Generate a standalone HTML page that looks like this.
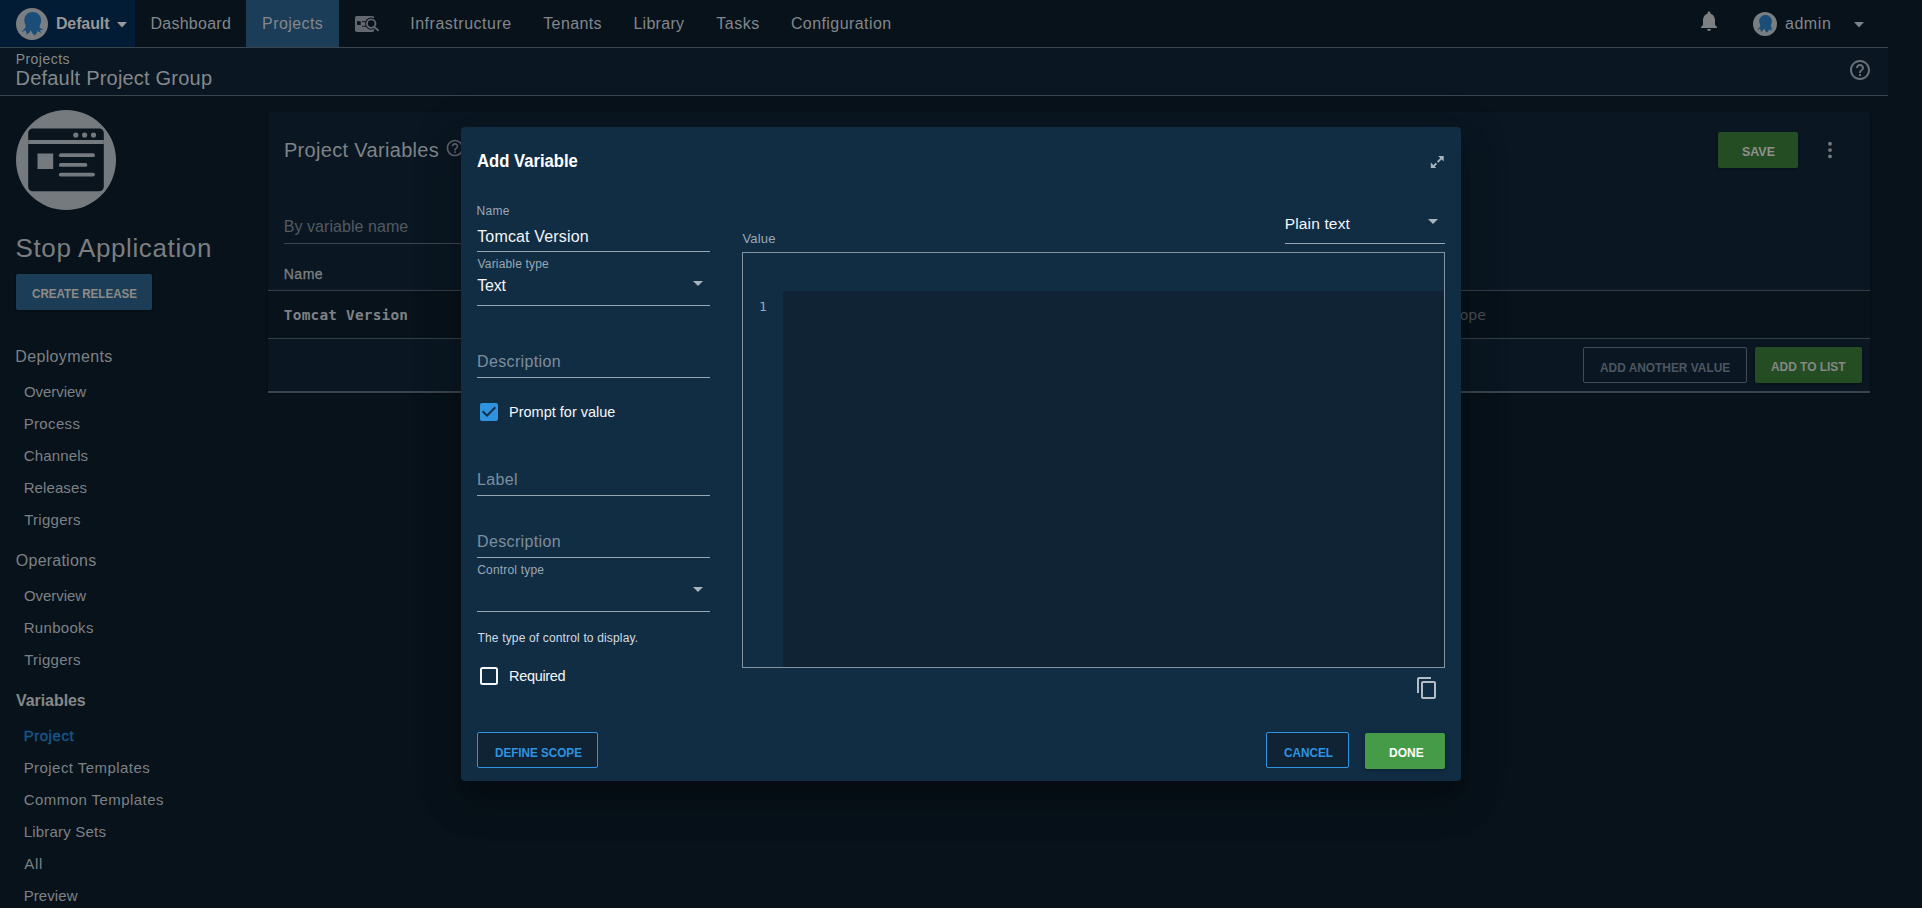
<!DOCTYPE html>
<html lang="en"><head><meta charset="utf-8"><title>Project Variables - Stop Application</title>
<style>
html,body{margin:0;padding:0}
body{width:1922px;height:908px;overflow:hidden;position:relative;background:#08121a;font-family:"Liberation Sans",sans-serif;-webkit-font-smoothing:auto}
.a{position:absolute;box-sizing:border-box}
.t{position:absolute;white-space:pre;display:block}
svg{position:absolute;overflow:visible}
#nav{left:0;top:0;width:1888px;height:48px;border-bottom:1px solid #3b454d;background:#08121a}
#space{left:0;top:0;width:135px;height:47px;background:#011c34}
#tab{left:246px;top:0;width:93px;height:47px;background:#1b3d58}
#crumb{left:0;top:48px;width:1888px;height:48px;border-bottom:1px solid #3b454d;background:#0a1722}
#panel{left:268px;top:112px;width:1602px;height:280px;background:#0a1722;border-radius:3px;box-shadow:0 1px 3px rgba(0,0,0,.35)}
.hl{height:1px;background:#363f48}
.btn{border-radius:2px}
#dialog{left:461px;top:127px;width:1000px;height:654px;background:#112d44;border-radius:4px;box-shadow:0 11px 15px -7px rgba(0,0,0,.2),0 24px 38px 3px rgba(0,0,0,.14),0 9px 46px 8px rgba(0,0,0,.12)}
.ul{height:1px;background:#98a6b3}

</style></head><body>
<div class="a" id="nav"></div>
<div class="a" id="space"></div>
<div class="a" id="tab"></div>
<div class="a" id="crumb"></div>
<!-- space avatar -->
<svg style="left:16px;top:8px" width="32" height="32" viewBox="0 0 32 32"><circle cx="16" cy="16" r="16" fill="#7b7e80"/><path fill="#1a4e78" d="M16.700 4.100C21.400 4.100 25.100 7.600 25.100 12.200C25.100 14.400 24.500 16 23.800 17.400C23.300 18.400 23.600 19.300 24.600 20.200C25.300 20.800 26.200 21.400 27 21.800C25.800 22.400 24.600 22.100 23.600 21.400C24 22.700 24.700 23.800 25.400 24.800C23.700 24.800 22.300 23.900 21.200 22.600C21.200 24.500 20.400 26.200 18.800 27.400C17.200 26.300 15.600 24.200 14.700 21.900C14 23.800 12.600 25.600 10.600 26.600C10.300 25 10 23.400 9.400 21.900C8.200 23 6.800 23.600 5.200 23.600C7 22.400 8.600 20.800 9.400 19.400C9.900 18.500 9.900 17.600 9.400 16.800C8.700 15.500 8.300 14 8.300 12.300C8.300 7.600 12 4.100 16.700 4.100z"/></svg>
<svg style="left:117px;top:22px" width="10" height="6" viewBox="0 0 10 6"><path d="M0 0h10L5 5.4z" fill="#9a9a9a"/></svg>
<!-- nav search icon -->
<svg style="left:352px;top:12px" width="30" height="24" viewBox="352 12 30 24">
 <rect x="355" y="16" width="19.2" height="16" rx="1.8" fill="#626770"/>
 <rect x="357" y="21.2" width="3.7" height="3.7" fill="#08121a"/>
 <rect x="362" y="21.2" width="4" height=".9" fill="#08121a"/><rect x="362" y="25.8" width="4" height=".9" fill="#08121a"/>
 <circle cx="371.2" cy="23.6" r="6.1" fill="#08121a"/>
 <path d="M374.2 27.2l4.2 3.4" stroke="#08121a" stroke-width="3.6" stroke-linecap="round"/>
 <circle cx="371.2" cy="23.6" r="4.25" fill="none" stroke="#626770" stroke-width="1.9"/>
 <path d="M374.4 27.2l3.7 3" stroke="#626770" stroke-width="1.9" stroke-linecap="round"/>
</svg>
<!-- bell -->
<svg style="left:1697px;top:9px" width="24" height="24" viewBox="0 0 24 24"><path fill="#7d8083" d="M12 22c1.1 0 2-.9 2-2h-4c0 1.1.89 2 2 2zm6-6v-5c0-3.070-1.640-5.640-4.500-6.320V4c0-.830-.670-1.500-1.500-1.500s-1.500.670-1.500 1.500v.680C7.630 5.360 6 7.920 6 11v5l-2 2v1h16v-1l-2-2z"/></svg>
<!-- user avatar -->
<svg style="left:1753px;top:12px" width="24" height="24" viewBox="0 0 32 32"><circle cx="16" cy="16" r="16" fill="#7b7e80"/><path fill="#1a4e78" d="M16.700 4.100C21.400 4.100 25.100 7.600 25.100 12.200C25.100 14.400 24.500 16 23.800 17.400C23.300 18.400 23.600 19.300 24.600 20.200C25.300 20.800 26.200 21.400 27 21.800C25.800 22.400 24.600 22.100 23.600 21.400C24 22.700 24.700 23.800 25.400 24.800C23.700 24.800 22.300 23.900 21.200 22.600C21.200 24.500 20.400 26.200 18.800 27.400C17.200 26.300 15.600 24.200 14.700 21.900C14 23.800 12.600 25.600 10.600 26.600C10.300 25 10 23.400 9.400 21.900C8.200 23 6.800 23.600 5.200 23.600C7 22.400 8.600 20.800 9.400 19.400C9.900 18.500 9.900 17.600 9.400 16.800C8.700 15.500 8.300 14 8.300 12.300C8.300 7.600 12 4.100 16.700 4.100z"/></svg>
<svg style="left:1854px;top:22px" width="10" height="6" viewBox="0 0 10 6"><path d="M0 0h10L5 5.4z" fill="#7d8288"/></svg>
<!-- header help -->
<svg style="left:1848px;top:58px" width="24" height="24" viewBox="0 0 24 24"><path fill="#6a7077" d="M11 18h2v-2h-2v2zm1-16C6.480 2 2 6.480 2 12s4.480 10 10 10 10-4.480 10-10S17.520 2 12 2zm0 18c-4.410 0-8-3.590-8-8s3.590-8 8-8 8 3.590 8 8-3.590 8-8 8zm0-14c-2.210 0-4 1.790-4 4h2c0-1.100.9-2 2-2s2 .9 2 2c0 2-3 1.750-3 5h2c0-2.250 3-2.500 3-5 0-2.210-1.790-4-4-4z"/></svg>
<!-- project logo -->
<svg style="left:16px;top:110px" width="100" height="100" viewBox="16 110 100 100">
 <circle cx="66" cy="160" r="50" fill="#757a7e"/>
 <rect x="28.200" y="128.4" width="75.600" height="62.8" rx="4.500" fill="#0b151e"/>
 <rect x="28.200" y="140" width="75.600" height="4" fill="#757a7e"/>
 <circle cx="75.800" cy="135" r="2.600" fill="#757a7e"/><circle cx="84.600" cy="135" r="2.600" fill="#757a7e"/><circle cx="93.500" cy="135" r="2.600" fill="#757a7e"/>
 <rect x="37.500" y="153.500" width="15.700" height="15.500" fill="#757a7e"/>
 <rect x="58.900" y="153.300" width="36" height="3.800" rx="1.900" fill="#757a7e"/>
 <rect x="58.900" y="163" width="28.400" height="3.800" rx="1.900" fill="#757a7e"/>
 <rect x="58.900" y="172.700" width="36" height="3.800" rx="1.900" fill="#757a7e"/>
</svg>
<div class="a btn" style="left:16px;top:274px;width:136px;height:36px;background:#1b3d58;box-shadow:0 1px 3px rgba(0,0,0,.4)"></div>
<!-- panel -->
<div class="a" id="panel"></div>
<svg style="left:445px;top:138.400px" width="20" height="20" viewBox="0 0 24 24"><path fill="#5d636a" d="M11 18h2v-2h-2v2zm1-16C6.480 2 2 6.480 2 12s4.480 10 10 10 10-4.480 10-10S17.520 2 12 2zm0 18c-4.410 0-8-3.590-8-8s3.590-8 8-8 8 3.590 8 8-3.590 8-8 8zm0-14c-2.210 0-4 1.790-4 4h2c0-1.100.9-2 2-2s2 .9 2 2c0 2-3 1.750-3 5h2c0-2.250 3-2.500 3-5 0-2.210-1.790-4-4-4z"/></svg>
<div class="a hl" style="left:284px;top:243px;width:250px;background:#3d464e"></div>
<div class="a" style="left:268px;top:291px;width:1602px;height:47px;background:#08121a"></div>
<div class="a hl" style="left:268px;top:290px;width:1602px"></div>
<div class="a hl" style="left:268px;top:338px;width:1602px"></div>
<div class="a hl" style="left:268px;top:391px;width:1602px;height:2px;background:#3c434a"></div>
<div class="a btn" style="left:1718px;top:132px;width:80px;height:36px;background:#244d24;box-shadow:0 1px 3px rgba(0,0,0,.4)"></div>
<svg style="left:1827px;top:140px" width="6" height="20" viewBox="1827 140 6 20"><circle cx="1830" cy="143.800" r="1.950" fill="#747679"/><circle cx="1830" cy="150.100" r="1.950" fill="#747679"/><circle cx="1830" cy="156.400" r="1.950" fill="#747679"/></svg>
<div class="a btn" style="left:1583px;top:347px;width:164px;height:36px;border:1px solid #444b52"></div>
<div class="a btn" style="left:1755px;top:347px;width:107px;height:36px;background:#244d24;box-shadow:0 1px 3px rgba(0,0,0,.4)"></div>
<span class="t" id="t0" style='left:55.93px;top:12px;font-size:16px;line-height:23px;color:#989796;font-weight:700;letter-spacing:-0.111px;'>Default</span>
<span class="t" id="t1" style='left:150.49px;top:12px;font-size:16px;line-height:23px;color:#82878c;letter-spacing:0.258px;'>Dashboard</span>
<span class="t" id="t2" style='left:262.09px;top:12px;font-size:16px;line-height:23px;color:#82878c;letter-spacing:0.413px;'>Projects</span>
<span class="t" id="t3" style='left:410.22px;top:12px;font-size:16px;line-height:23px;color:#82878c;letter-spacing:0.517px;'>Infrastructure</span>
<span class="t" id="t4" style='left:543.24px;top:12px;font-size:16px;line-height:23px;color:#82878c;letter-spacing:0.382px;'>Tenants</span>
<span class="t" id="t5" style='left:633.39px;top:12px;font-size:16px;line-height:23px;color:#82878c;letter-spacing:0.290px;'>Library</span>
<span class="t" id="t6" style='left:716.24px;top:12px;font-size:16px;line-height:23px;color:#82878c;letter-spacing:0.508px;'>Tasks</span>
<span class="t" id="t7" style='left:790.89px;top:12px;font-size:16px;line-height:23px;color:#82878c;letter-spacing:0.423px;'>Configuration</span>
<span class="t" id="t8" style='left:1784.92px;top:12px;font-size:16px;line-height:23px;color:#82878c;letter-spacing:0.585px;'>admin</span>
<span class="t" id="t9" style='left:15.65px;top:48px;font-size:14px;line-height:22px;color:#84888c;letter-spacing:0.468px;'>Projects</span>
<span class="t" id="t10" style='left:15.56px;top:64px;font-size:20px;line-height:28px;color:#84888c;letter-spacing:0.208px;'>Default Project Group</span>
<span class="t" id="t11" style='left:15.52px;top:230px;font-size:26px;line-height:36px;color:#7b7e81;letter-spacing:0.627px;'>Stop Application</span>
<span class="t" id="t12" style='left:31.72px;top:283px;font-size:13.5px;line-height:21px;color:#8f8b86;font-weight:700;transform:scaleX(0.8608);transform-origin:0 0;'>CREATE RELEASE</span>
<span class="t" id="t13" style='left:15.29px;top:345px;font-size:16px;line-height:23px;color:#7d8186;letter-spacing:0.352px;'>Deployments</span>
<span class="t" id="t14" style='left:23.89px;top:380px;font-size:15px;line-height:23px;color:#7d8186;letter-spacing:-0.049px;'>Overview</span>
<span class="t" id="t15" style='left:23.67px;top:412px;font-size:15px;line-height:23px;color:#7d8186;letter-spacing:0.347px;'>Process</span>
<span class="t" id="t16" style='left:23.84px;top:444px;font-size:15px;line-height:23px;color:#7d8186;letter-spacing:0.130px;'>Channels</span>
<span class="t" id="t17" style='left:23.67px;top:476px;font-size:15px;line-height:23px;color:#7d8186;letter-spacing:0.104px;'>Releases</span>
<span class="t" id="t18" style='left:24.16px;top:508px;font-size:15px;line-height:23px;color:#7d8186;letter-spacing:0.273px;'>Triggers</span>
<span class="t" id="t19" style='left:15.84px;top:549px;font-size:16px;line-height:23px;color:#7d8186;letter-spacing:0.230px;'>Operations</span>
<span class="t" id="t20" style='left:23.89px;top:584px;font-size:15px;line-height:23px;color:#7d8186;letter-spacing:-0.049px;'>Overview</span>
<span class="t" id="t21" style='left:23.67px;top:616px;font-size:15px;line-height:23px;color:#7d8186;letter-spacing:0.318px;'>Runbooks</span>
<span class="t" id="t22" style='left:24.16px;top:648px;font-size:15px;line-height:23px;color:#7d8186;letter-spacing:0.273px;'>Triggers</span>
<span class="t" id="t23" style='left:15.99px;top:689px;font-size:16px;line-height:23px;color:#858789;font-weight:700;letter-spacing:-0.064px;'>Variables</span>
<span class="t" id="t24" style='left:23.67px;top:724px;font-size:15px;line-height:23px;color:#17578b;letter-spacing:0.542px;-webkit-text-stroke:0.4px #17578b;'>Project</span>
<span class="t" id="t25" style='left:23.67px;top:756px;font-size:15px;line-height:23px;color:#7d8186;letter-spacing:0.445px;'>Project Templates</span>
<span class="t" id="t26" style='left:23.84px;top:788px;font-size:15px;line-height:23px;color:#7d8186;letter-spacing:0.432px;'>Common Templates</span>
<span class="t" id="t27" style='left:23.67px;top:820px;font-size:15px;line-height:23px;color:#7d8186;letter-spacing:0.202px;'>Library Sets</span>
<span class="t" id="t28" style='left:24.27px;top:852px;font-size:15px;line-height:23px;color:#7d8186;letter-spacing:0.680px;'>All</span>
<span class="t" id="t29" style='left:23.67px;top:884px;font-size:15px;line-height:23px;color:#7d8186;letter-spacing:0.089px;'>Preview</span>
<span class="t" id="t30" style='left:283.96px;top:136px;font-size:20px;line-height:28px;color:#7f8388;letter-spacing:0.323px;'>Project Variables</span>
<span class="t" id="t31" style='left:283.69px;top:215px;font-size:16px;line-height:23px;color:#525960;letter-spacing:0.060px;'>By variable name</span>
<span class="t" id="t32" style='left:283.75px;top:263px;font-size:14px;line-height:22px;color:#7d8083;letter-spacing:0.504px;-webkit-text-stroke:0.3px #7d8083;'>Name</span>
<span class="t" id="t33" style='left:283.87px;top:304px;font-size:14.4px;line-height:22px;color:#7f8184;font-weight:700;font-family:"DejaVu Sans Mono", "Liberation Mono", monospace;letter-spacing:0.221px;'>Tomcat Version</span>
<span class="t" id="t34" style='left:1394.63px;top:304px;font-size:14px;line-height:22px;color:#4b5055;font-family:"DejaVu Sans", "Liberation Sans", sans-serif;'>Define scope</span>
<span class="t" id="t35" style='left:1742.24px;top:141px;font-size:13.5px;line-height:21px;color:#8f908c;font-weight:700;transform:scaleX(0.9211);transform-origin:0 0;'>SAVE</span>
<span class="t" id="t36" style='left:1599.80px;top:357px;font-size:13.5px;line-height:21px;color:#4c5662;font-weight:700;transform:scaleX(0.8810);transform-origin:0 0;'>ADD ANOTHER VALUE</span>
<span class="t" id="t37" style='left:1771.20px;top:356px;font-size:13.5px;line-height:21px;color:#868783;font-weight:700;transform:scaleX(0.8818);transform-origin:0 0;'>ADD TO LIST</span>
<!-- dialog -->
<div class="a" id="dialog"></div>
<svg style="left:1430px;top:155px" width="15" height="15" viewBox="1430 155 15 15"><g fill="#a9b3bd"><path d="M1438.200 156h5.500v5.500z"/><path d="M1430.800 162.600v5.500h5.500z"/></g><g stroke="#a9b3bd" stroke-width="1.900"><path d="M1441.500 158.200l-3.900 3.900"/><path d="M1436.400 163.300l-3.500 3.500"/></g></svg>
<div class="a ul" style="left:477px;top:251px;width:233px"></div>
<div class="a ul" style="left:477px;top:305px;width:233px"></div>
<svg style="left:693px;top:281px" width="10" height="6" viewBox="0 0 10 6"><path d="M0 0h10L5 5z" fill="#aab4bd"/></svg>
<div class="a ul" style="left:477px;top:377px;width:233px"></div>
<svg style="left:480px;top:403px" width="18" height="18" viewBox="3 3 18 18"><path fill="#2f93e0" d="M19 3H5c-1.110 0-2 .9-2 2v14c0 1.100.890 2 2 2h14c1.110 0 2-.9 2-2V5c0-1.100-.890-2-2-2zm-9 14l-5-5 1.410-1.410L10 14.170l7.590-7.590L19 8l-9 9z"/></svg>
<div class="a ul" style="left:477px;top:495px;width:233px"></div>
<div class="a ul" style="left:477px;top:557px;width:233px"></div>
<svg style="left:693px;top:587px" width="10" height="6" viewBox="0 0 10 6"><path d="M0 0h10L5 5z" fill="#aab4bd"/></svg>
<div class="a ul" style="left:477px;top:611px;width:233px"></div>
<div class="a" style="left:480px;top:667px;width:18px;height:18px;border:2px solid #f4f6f8;border-radius:2.500px"></div>
<div class="a btn" style="left:477px;top:732px;width:121px;height:36px;border:1px solid #2f93e0;background:#0f2335"></div>
<!-- value side -->
<div class="a ul" style="left:1285px;top:243px;width:160px"></div>
<svg style="left:1428px;top:219px" width="10" height="6" viewBox="0 0 10 6"><path d="M0 0h10L5 5z" fill="#aab4bd"/></svg>
<div class="a" style="left:742px;top:252px;width:703px;height:416px;border:1px solid #8494a1"></div>
<div class="a" style="left:783px;top:291px;width:661px;height:376px;background:#0f2335"></div>
<svg style="left:1415px;top:676px" width="24" height="24" viewBox="0 0 24 24"><path fill="#b4bdc6" d="M16 1H4c-1.100 0-2 .9-2 2v14h2V3h12V1zm3 4H8c-1.100 0-2 .9-2 2v14c0 1.100.9 2 2 2h11c1.100 0 2-.9 2-2V7c0-1.100-.9-2-2-2zm0 16H8V7h11v14z"/></svg>
<div class="a btn" style="left:1266px;top:732px;width:83px;height:36px;border:1px solid #2f93e0;background:#0f2335"></div>
<div class="a btn" style="left:1365px;top:733px;width:80px;height:36px;background:#469b48;box-shadow:0 1px 4px rgba(0,0,0,.35)"></div>
<span class="t" id="t38" style='left:476.69px;top:148px;font-size:18px;line-height:26px;color:#ffffff;font-weight:700;transform:scaleX(0.9251);transform-origin:0 0;'>Add Variable</span>
<span class="t" id="t39" style='left:476.62px;top:201px;font-size:12px;line-height:20px;color:#9aa8b5;letter-spacing:0.234px;'>Name</span>
<span class="t" id="t40" style='left:477.19px;top:225px;font-size:16px;line-height:23px;color:#f4f6f8;letter-spacing:0.162px;'>Tomcat Version</span>
<span class="t" id="t41" style='left:477.55px;top:254px;font-size:12px;line-height:20px;color:#9aa8b5;letter-spacing:0.169px;'>Variable type</span>
<span class="t" id="t42" style='left:477.14px;top:274px;font-size:16px;line-height:23px;color:#f4f6f8;letter-spacing:-0.189px;'>Text</span>
<span class="t" id="t43" style='left:477.09px;top:350px;font-size:16px;line-height:23px;color:#7d8e9d;letter-spacing:0.342px;'>Description</span>
<span class="t" id="t44" style='left:509.01px;top:401px;font-size:14.5px;line-height:22px;color:#f4f6f8;letter-spacing:0.003px;'>Prompt for value</span>
<span class="t" id="t45" style='left:476.99px;top:468px;font-size:16px;line-height:23px;color:#7d8e9d;letter-spacing:0.357px;'>Label</span>
<span class="t" id="t46" style='left:477.09px;top:530px;font-size:16px;line-height:23px;color:#7d8e9d;letter-spacing:0.342px;'>Description</span>
<span class="t" id="t47" style='left:477.19px;top:560px;font-size:12px;line-height:20px;color:#9aa8b5;letter-spacing:0.185px;'>Control type</span>
<span class="t" id="t48" style='left:477.53px;top:628px;font-size:12px;line-height:20px;color:#d5dbe1;letter-spacing:0.157px;'>The type of control to display.</span>
<span class="t" id="t49" style='left:509.11px;top:665px;font-size:14.5px;line-height:22px;color:#f4f6f8;letter-spacing:-0.346px;'>Required</span>
<span class="t" id="t50" style='left:494.72px;top:742px;font-size:13.5px;line-height:21px;color:#2f93e0;font-weight:700;transform:scaleX(0.8648);transform-origin:0 0;'>DEFINE SCOPE</span>
<span class="t" id="t51" style='left:742.44px;top:228px;font-size:13px;line-height:21px;color:#9aa8b5;letter-spacing:0.159px;'>Value</span>
<span class="t" id="t52" style='left:1284.78px;top:212px;font-size:15.5px;line-height:23px;color:#f4f6f8;letter-spacing:0.147px;'>Plain text</span>
<span class="t" id="t53" style='left:759.04px;top:296px;font-size:13px;line-height:21px;color:#9aa8b5;font-family:"DejaVu Sans Mono", "Liberation Mono", monospace;'>1</span>
<span class="t" id="t54" style='left:1283.52px;top:742px;font-size:13.5px;line-height:21px;color:#2f93e0;font-weight:700;transform:scaleX(0.8710);transform-origin:0 0;'>CANCEL</span>
<span class="t" id="t55" style='left:1388.50px;top:742px;font-size:13.5px;line-height:21px;color:#ffffff;font-weight:700;transform:scaleX(0.8886);transform-origin:0 0;'>DONE</span>

</body></html>
